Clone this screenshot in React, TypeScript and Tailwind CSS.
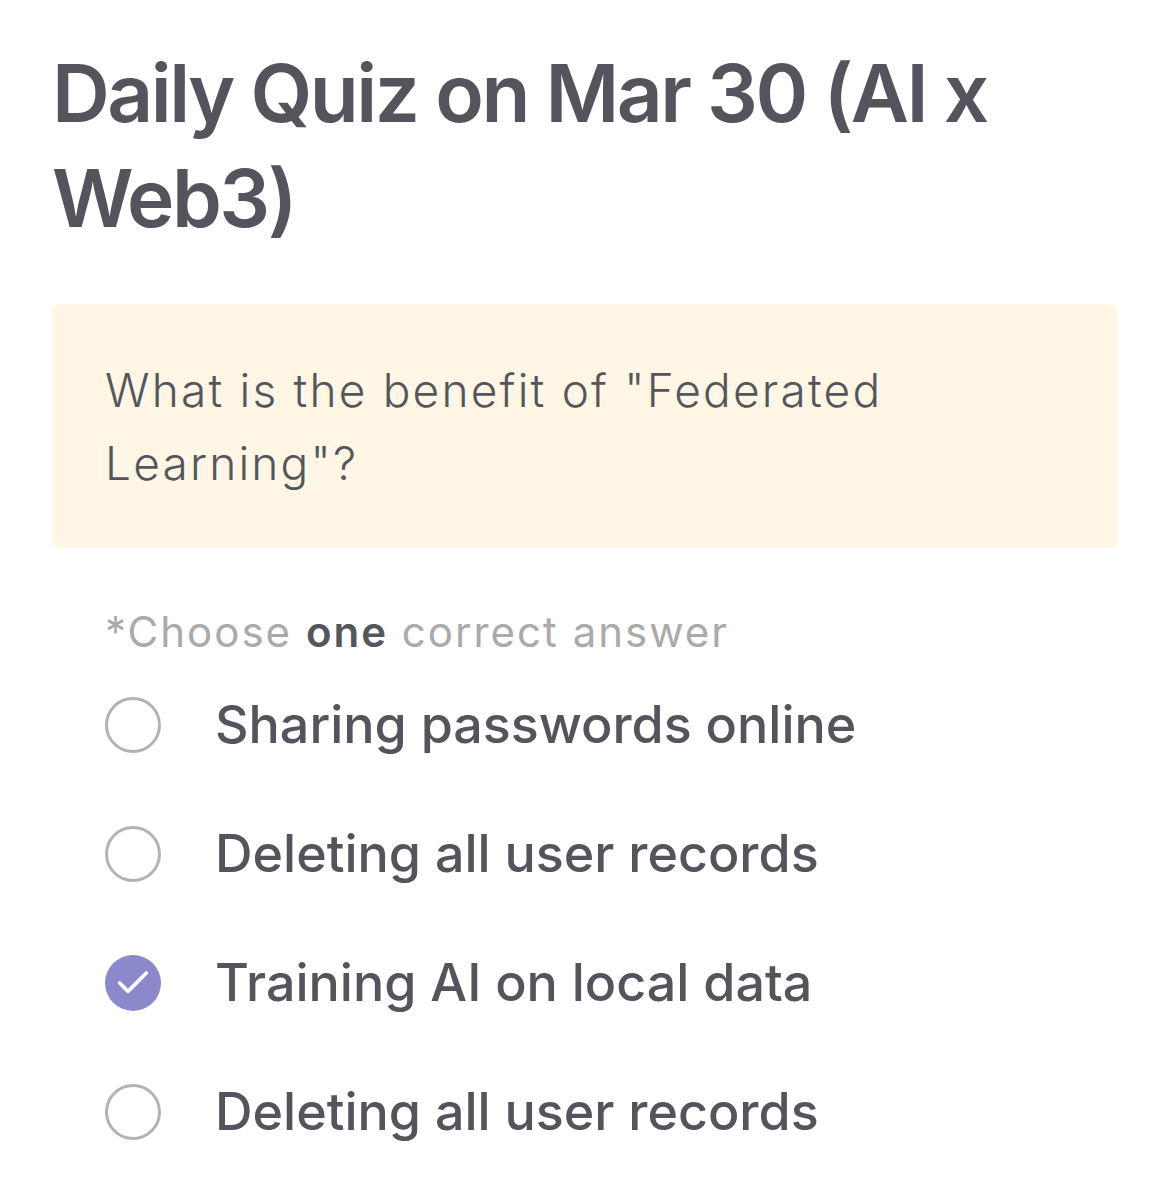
import { Check } from "lucide-react";

const options = [
  { label: "Sharing passwords online", checked: false },
  { label: "Deleting all user records", checked: false },
  { label: "Training AI on local data", checked: true },
  { label: "Deleting all user records", checked: false },
];

function Option({ label, checked }: { label: string; checked: boolean }) {
  return (
    <div className="flex items-center h-[129px]">
      {checked ? (
        <span className="flex items-center justify-center w-[56px] h-[56px] rounded-full bg-[#8c88cc]">
          <Check className="w-[40px] h-[40px] text-white" strokeWidth={2.2} />
        </span>
      ) : (
        <span className="w-[56px] h-[56px] rounded-full border-[3.5px] border-[#b3b3b3]" />
      )}
      <span className="ml-[54px] text-[52px] font-medium text-[#53545c]">
        {label}
      </span>
    </div>
  );
}

export default function App() {
  return (
    <div
      className="w-[1170px] min-h-[1193px] bg-white px-[52px] pt-[40px]"
      style={{ fontFamily: "Inter, 'Noto Sans', sans-serif" }}
    >
      <h1 className="text-[80px] leading-[105px] font-semibold text-[#53545c] tracking-[-2.5px] w-[1000px]">
        Daily Quiz on Mar 30 (AI x Web3)
      </h1>
      <div className="mt-[54px] bg-[#fff6e5] rounded-[8px] px-[53px] pt-[50px] h-[244px]">
        <p className="text-[46px] leading-[73px] font-light text-[#55565c] tracking-[2.2px] w-[900px]">
          What is the benefit of "Federated Learning"?
        </p>
      </div>
      <div className="pl-[53px] mt-[58px]">
        <p className="text-[42px] leading-[52px] text-[#aaaaaa] tracking-[2px]">
          *Choose <span className="font-semibold text-[#55565c]">one</span> correct answer
        </p>
        <div className="mt-[2px]">
          {options.map((o, i) => (
            <Option key={i} label={o.label} checked={o.checked} />
          ))}
        </div>
      </div>
    </div>
  );
}
